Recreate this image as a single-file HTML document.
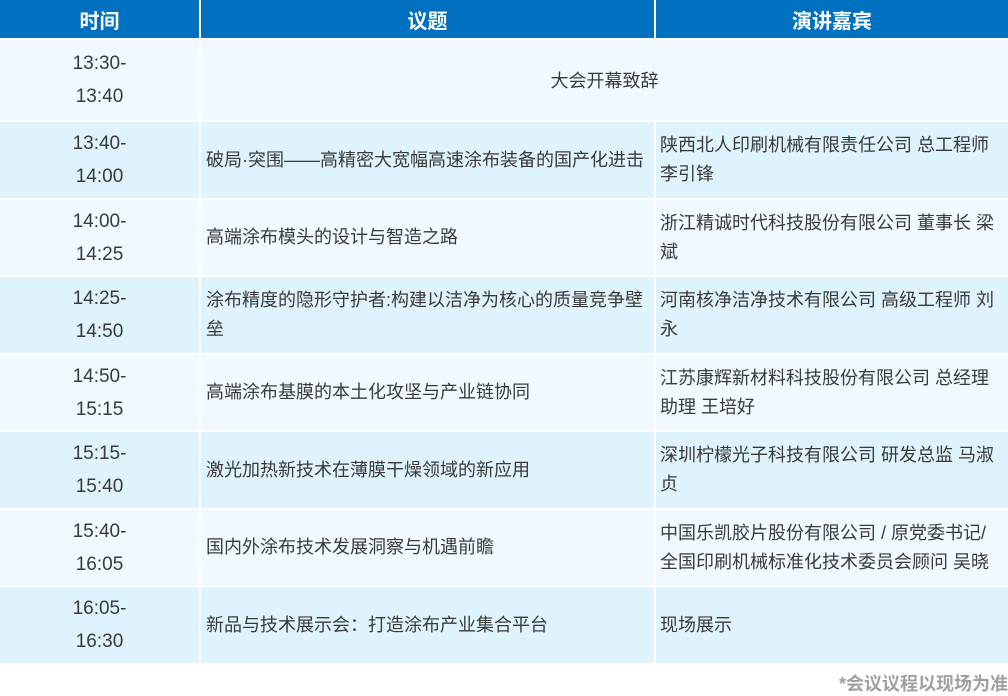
<!DOCTYPE html>
<html><head><meta charset="utf-8"><style>
*{margin:0;padding:0;box-sizing:border-box}
body{width:1008px;height:692px;background:#fff;font-family:"Liberation Sans","Noto Sans CJK SC",sans-serif;color:#3a3a3a;position:relative;overflow:hidden}
.c{position:absolute;display:flex;align-items:center;font-size:18px}
.h{background:#0070c0;color:#fff;font-weight:bold;justify-content:center;font-size:20px}
.t{justify-content:center;text-align:center;line-height:33px;font-size:19px}
.a{padding-left:5px;line-height:29px}
.b{padding-left:4px;padding-right:2px;line-height:29px}
.o{background:#f0f9ff}.e{background:#dff3fc}
.note{position:absolute;right:0;top:670px;font-size:18px;font-weight:bold;color:#a0a0a0}
</style></head><body>
<div class="c h" style="left:0;top:0;width:199px;height:38px">时间</div>
<div class="c h" style="left:201px;top:0;width:453px;height:38px">议题</div>
<div class="c h" style="left:656px;top:0;width:352px;height:38px">演讲嘉宾</div>

<div class="c t o" style="left:0;top:40px;width:199px;height:80px">13:30-<br>13:40</div>
<div class="c o" style="left:201px;top:40px;width:807px;height:80px;justify-content:center">大会开幕致辞</div>

<div class="c t e" style="left:0;top:122px;width:199px;height:76px">13:40-<br>14:00</div>
<div class="c a e" style="left:201px;top:122px;width:453px;height:76px">破局·突围——高精密大宽幅高速涂布装备的国产化进击</div>
<div class="c b e" style="left:656px;top:122px;width:352px;height:76px">陕西北人印刷机械有限责任公司 总工程师 李引锋</div>

<div class="c t o" style="left:0;top:200px;width:199px;height:75px">14:00-<br>14:25</div>
<div class="c a o" style="left:201px;top:200px;width:453px;height:75px">高端涂布模头的设计与智造之路</div>
<div class="c b o" style="left:656px;top:200px;width:352px;height:75px">浙江精诚时代科技股份有限公司 董事长 梁斌</div>

<div class="c t e" style="left:0;top:277px;width:199px;height:76px">14:25-<br>14:50</div>
<div class="c a e" style="left:201px;top:277px;width:453px;height:76px">涂布精度的隐形守护者:构建以洁净为核心的质量竞争壁垒</div>
<div class="c b e" style="left:656px;top:277px;width:352px;height:76px">河南核净洁净技术有限公司 高级工程师 刘永</div>

<div class="c t o" style="left:0;top:355px;width:199px;height:75px">14:50-<br>15:15</div>
<div class="c a o" style="left:201px;top:355px;width:453px;height:75px">高端涂布基膜的本土化攻坚与产业链协同</div>
<div class="c b o" style="left:656px;top:355px;width:352px;height:75px">江苏康辉新材料科技股份有限公司 总经理助理 王培好</div>

<div class="c t e" style="left:0;top:432px;width:199px;height:76px">15:15-<br>15:40</div>
<div class="c a e" style="left:201px;top:432px;width:453px;height:76px">激光加热新技术在薄膜干燥领域的新应用</div>
<div class="c b e" style="left:656px;top:432px;width:352px;height:76px">深圳柠檬光子科技有限公司 研发总监 马淑贞</div>

<div class="c t o" style="left:0;top:510px;width:199px;height:75px">15:40-<br>16:05</div>
<div class="c a o" style="left:201px;top:510px;width:453px;height:75px">国内外涂布技术发展洞察与机遇前瞻</div>
<div class="c b o" style="left:656px;top:510px;width:352px;height:75px">中国乐凯胶片股份有限公司 / 原党委书记/<br>全国印刷机械标准化技术委员会顾问 吴晓</div>

<div class="c t e" style="left:0;top:587px;width:199px;height:76px">16:05-<br>16:30</div>
<div class="c a e" style="left:201px;top:587px;width:453px;height:76px">新品与技术展示会：打造涂布产业集合平台</div>
<div class="c b e" style="left:656px;top:587px;width:352px;height:76px">现场展示</div>

<div class="note">*会议议程以现场为准</div>
</body></html>
